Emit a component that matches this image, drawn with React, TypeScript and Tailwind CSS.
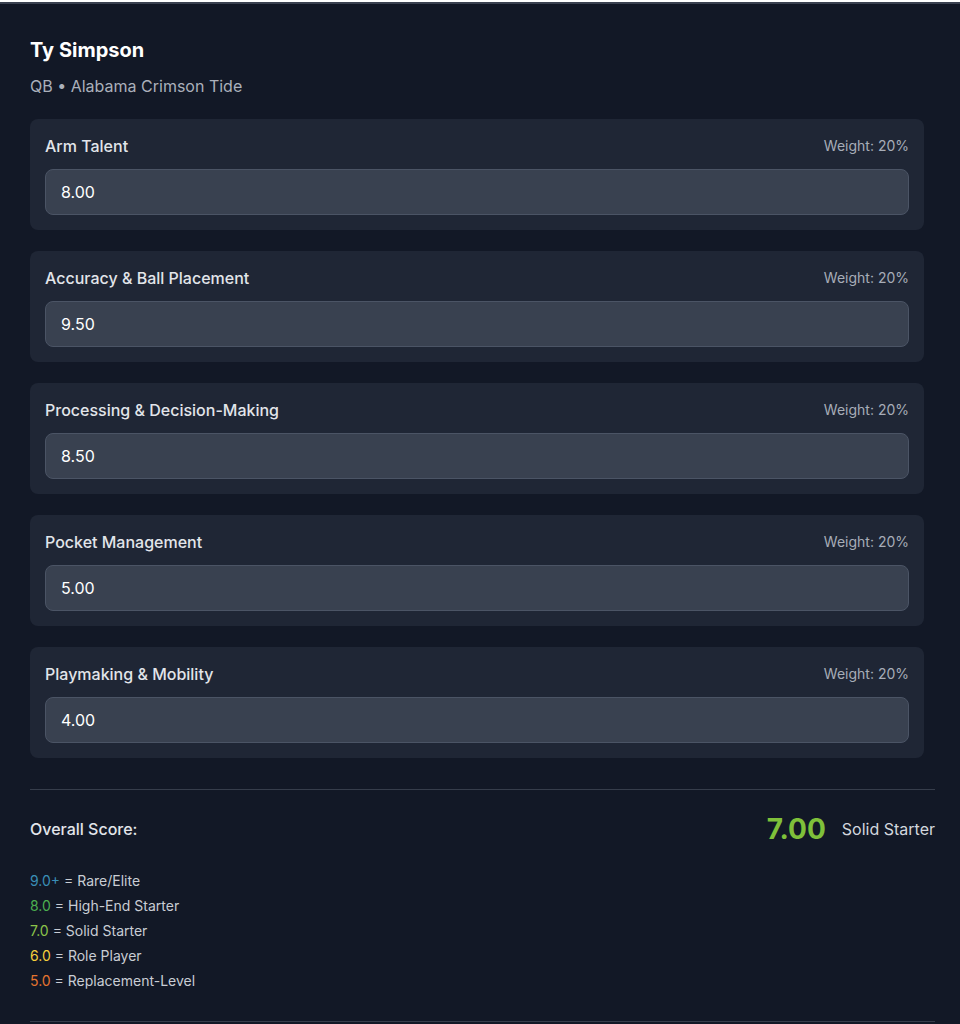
import { useState } from 'react'

const criteria = [
  { name: 'Arm Talent', value: '8.00' },
  { name: 'Accuracy & Ball Placement', value: '9.50' },
  { name: 'Processing & Decision-Making', value: '8.50' },
  { name: 'Pocket Management', value: '5.00' },
  { name: 'Playmaking & Mobility', value: '4.00' },
]

const legend = [
  { score: '9.0+', label: 'Rare/Elite', color: 'text-[#3a8fb7]' },
  { score: '8.0', label: 'High-End Starter', color: 'text-[#4caf50]' },
  { score: '7.0', label: 'Solid Starter', color: 'text-[#8bc34a]' },
  { score: '6.0', label: 'Role Player', color: 'text-[#f5cf3c]' },
  { score: '5.0', label: 'Replacement-Level', color: 'text-[#e5742f]' },
]

export default function App() {
  const [values, setValues] = useState(criteria.map(c => c.value))

  return (
    <div className="min-h-screen bg-[#121826] font-['Inter','Liberation_Sans',Arial,sans-serif]">
      <div className="h-[2px] mt-[2px] bg-[#3a4150]" />
      <div className="pl-[30px] pr-[25px] pt-[32px]">
        <h2 className="text-[20px] leading-7 font-bold text-white">Ty Simpson</h2>
        <p className="mt-[10px] text-[16px] leading-6 text-[#aab0bb]">QB • Alabama Crimson Tide</p>

        <div className="mt-[21px] mr-[11px] flex flex-col gap-[21px]">
          {criteria.map((c, i) => (
            <div key={c.name} className="bg-[#1f2635] rounded-[8px] px-[15px] pt-[15px] pb-[15px]">
              <div className="flex items-center justify-between mb-[11px]">
                <span className="text-[16px] leading-6 text-[#e2e5ea] font-medium">{c.name}</span>
                <span className="text-[14px] leading-5 text-[#a7adb8]">Weight: 20%</span>
              </div>
              <input
                value={values[i]}
                onChange={e => {
                  const next = [...values]
                  next[i] = e.target.value
                  setValues(next)
                }}
                className="w-full h-[46px] bg-[#394150] border border-[#4b5465] rounded-[8px] px-[15px] text-[16px] text-white focus:outline-none"
              />
            </div>
          ))}
        </div>

        <div className="mt-[31px] border-t border-[#363d4b]" />
        <div className="flex items-center justify-between pt-[21px]">
          <span className="text-[16px] font-medium text-[#e2e5ea]">Overall Score:</span>
          <div className="flex items-center gap-[16px]">
            <span className="text-[28px] leading-9 font-bold text-[#7fc03a]">7.00</span>
            <span className="text-[16px] text-[#d3d7de]">Solid Starter</span>
          </div>
        </div>

        <div className="mt-[21px] flex flex-col">
          {legend.map(l => (
            <div key={l.score} className="text-[14px] leading-[25px] text-[#c9cdd4]">
              <span className={l.color}>{l.score}</span> = {l.label}
            </div>
          ))}
        </div>

        <div className="mt-[28px] border-t border-[#363d4b]" />
      </div>
    </div>
  )
}
